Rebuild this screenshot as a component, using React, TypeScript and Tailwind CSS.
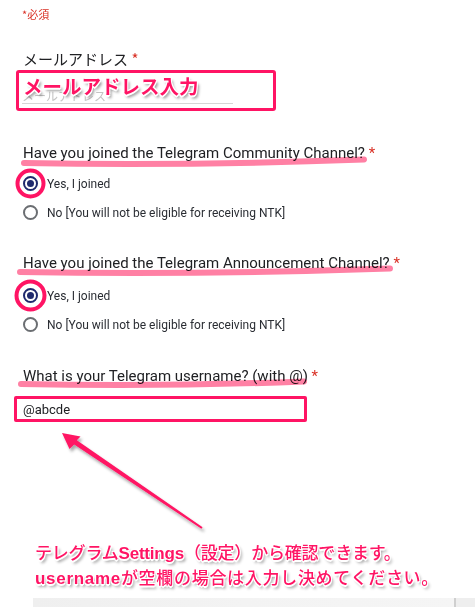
import React from "react";

const PINK = "#ff1464";

function Radio({ checked }: { checked: boolean }) {
  return checked ? (
    <div className="w-[15px] h-[15px] rounded-full border-2 border-[#1f2a6e] flex items-center justify-center shrink-0">
      <div className="w-[7px] h-[7px] rounded-full bg-[#1f2a6e]" />
    </div>
  ) : (
    <div className="w-[15px] h-[15px] rounded-full border-2 border-[#6b6e72] shrink-0" />
  );
}

function Option({ checked, label }: { checked: boolean; label: string }) {
  return (
    <div className="flex items-center h-[29px] gap-[9px]">
      <Radio checked={checked} />
      <span className="text-[12px] text-[#2a2d33] font-['Roboto',sans-serif]">{label}</span>
    </div>
  );
}

function Question({ text }: { text: string }) {
  return (
    <div className="text-[15px] leading-[20px] text-[#202124] font-['Roboto',sans-serif] whitespace-nowrap">
      {text}
      <span className="text-[#d93025]"> *</span>
    </div>
  );
}

export default function App() {
  const outline =
    "[text-shadow:-1px_-1px_0_#fff,1px_-1px_0_#fff,-1px_1px_0_#fff,1px_1px_0_#fff,0_2px_0_#fff,2px_3px_3px_rgba(0,0,0,0.45)]";
  return (
    <div className="relative w-[475px] h-[607px] overflow-hidden bg-white font-['Roboto','Noto_Sans_CJK_JP',sans-serif]">
      {/* required */}
      <div className="pt-[7px] pl-[22px] text-[11px] leading-[14px] text-[#d93025] font-['Noto_Sans_CJK_JP',sans-serif]">
        *必須
      </div>

      {/* email label */}
      <div className="mt-[28px] pl-[23px] text-[15px] leading-[20px] text-[#202124] font-['Noto_Sans_CJK_JP',sans-serif]">
        メールアドレス<span className="text-[#d93025]"> *</span>
      </div>

      {/* email box */}
      <div className="relative mt-[1px] ml-[16px] w-[260px] h-[41px] border-[3px] border-[#ff1464] rounded-[3px]">
        <div className="ml-[3px] w-[211px] pt-[16px] text-[12px] leading-[14px] text-[#c4c4c4] border-b border-[#d6d6d6] font-['Noto_Sans_CJK_JP',sans-serif]">
          メールアドレス
        </div>
        <div
          className={`absolute left-[4px] top-[1px] text-[19.5px] leading-[24px] font-bold text-[#ff1464] font-['Noto_Sans_CJK_JP',sans-serif] whitespace-nowrap ${outline}`}
        >
          メールアドレス入力
        </div>
      </div>

      {/* Q1 */}
      <div className="mt-[32px] pl-[23px]">
        <Question text="Have you joined the Telegram Community Channel?" />
        <div className="mt-[6px]">
          <Option checked label="Yes, I joined" />
          <Option checked={false} label="No [You will not be eligible for receiving NTK]" />
        </div>
      </div>

      {/* Q2 */}
      <div className="mt-[26px] pl-[23px]">
        <Question text="Have you joined the Telegram Announcement Channel?" />
        <div className="mt-[8px]">
          <Option checked label="Yes, I joined" />
          <Option checked={false} label="No [You will not be eligible for receiving NTK]" />
        </div>
      </div>

      {/* Q3 */}
      <div className="mt-[27px] pl-[23px]">
        <Question text="What is your Telegram username? (with @)" />
      </div>
      <div className="mt-[10px] ml-[14px] w-[293px] h-[26px] border-[3px] border-[#ff1464] rounded-[2px] pl-[6px] pt-[3px]">
        <div className="text-[13px] leading-[16px] text-[#202124] font-['Roboto',sans-serif]">@abcde</div>
      </div>

      {/* arrow */}
      <svg width="475" height="119" className="block">
        <defs>
          <filter id="sh" x="-20%" y="-20%" width="140%" height="140%">
            <feDropShadow dx="2" dy="3" stdDeviation="1.8" floodColor="#000" floodOpacity="0.35" />
          </filter>
        </defs>
        <polygon
          filter="url(#sh)"
          fill={PINK}
          points="62,11 80.5,14.5 76.8,18.2 202.6,105.2 201.4,106.8 74.2,22.4 69.5,27"
        />
      </svg>

      {/* annotation text */}
      <div
        className={`pl-[35px] text-[17px] leading-[22.5px] font-medium text-[#ff1464] font-['Noto_Sans_CJK_JP',sans-serif] whitespace-nowrap ${outline}`}
      >
        <div className="tracking-[-0.2px]">
          テレグラム<span className="font-bold font-['Liberation_Sans',sans-serif]">Settings</span>（設定）から確認できます。
        </div>
        <div className="tracking-[0.7px]">
          <span className="font-bold font-['Liberation_Sans',sans-serif]">username</span>が空欄の場合は入力し決めてください。
        </div>
      </div>

      {/* bottom strip */}
      <div className="mt-[8px] ml-[33px] h-[14px] flex">
        <div className="w-[421px] bg-gradient-to-r from-[#efefef] via-[#f3f3f3] to-[#f5f5f5]" />
        <div className="w-[2px] bg-[#cfcfcf]" />
        <div className="flex-1 bg-[#eeeeee]" />
      </div>

      {/* annotation overlays: highlights & circles */}
      <svg
        width="475"
        height="607"
        className="absolute left-0 top-0 pointer-events-none mix-blend-multiply"
      >
        <g stroke="#ff80a4" strokeWidth="6" strokeLinecap="round" fill="none">
          <path d="M24 163 Q 190 166 364 159.5" />
          <path d="M20 272 Q 200 275 390 268.5" />
          <path d="M21 384 Q 160 387 304 381.5" />
        </g>
        <g stroke={PINK} strokeWidth="4" fill="none">
          <circle cx="30.5" cy="183.5" r="13" />
          <circle cx="30.5" cy="295.5" r="14" />
        </g>
      </svg>
    </div>
  );
}
